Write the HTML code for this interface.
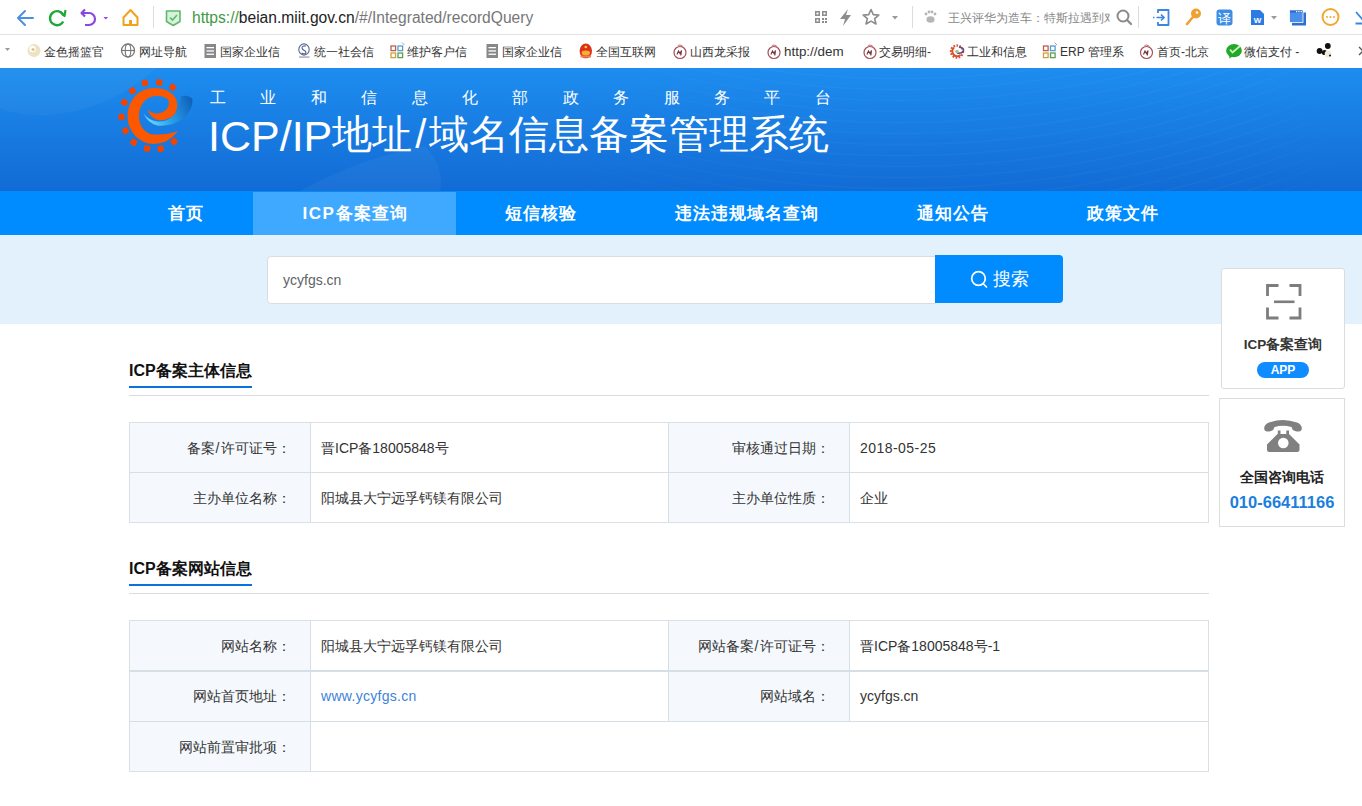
<!DOCTYPE html>
<html><head><meta charset="utf-8">
<style>
*{margin:0;padding:0;box-sizing:border-box}
html,body{width:1362px;height:806px;overflow:hidden;background:#fff;font-family:"Liberation Sans",sans-serif;color:#333}
.abs{position:absolute}
#toolbar{position:absolute;left:0;top:0;width:1362px;height:34px;background:#fff}
#tbline{position:absolute;left:0;top:34px;width:1362px;height:1px;background:#e3e3e3}
#bookmarks{position:absolute;left:0;top:35px;width:1362px;height:33px;background:#fff}
.bm{position:absolute;top:9px;font-size:12px;line-height:16px;color:#333;white-space:nowrap}
#header{position:absolute;left:0;top:68px;width:1362px;height:123px;background:linear-gradient(180deg,#1d8def 0%,#187ce2 50%,#126bd5 100%);overflow:hidden}
#nav{position:absolute;left:0;top:191px;width:1362px;height:44px;background:#008cff}
.navi{position:absolute;top:1px;height:43px;line-height:43px;color:#fff;font-size:17px;font-weight:bold;text-align:center;white-space:nowrap;letter-spacing:1px;text-indent:1px}
#band{position:absolute;left:0;top:235px;width:1362px;height:89px;background:#e3f1fc}
#sinput{position:absolute;left:267px;top:256px;width:669px;height:48px;background:#fff;border:1px solid #d9dde3;border-radius:4px 0 0 4px}
#sbtn{position:absolute;left:935px;top:255px;width:128px;height:48px;background:#008cff;border-radius:0 4px 4px 0}
.sec-title{position:absolute;left:129px;font-size:16px;font-weight:bold;color:#111;white-space:nowrap}
.sec-ul{position:absolute;left:129px;width:123px;height:2px;background:#0b72dc}
.sec-line{position:absolute;left:129px;width:1080px;height:1px;background:#d6dce2}
.tb{position:absolute;left:129px;width:1080px;border:1px solid #dcdfe4}
.cell{position:absolute;font-size:14px;color:#333;white-space:nowrap}
.vl{width:1px;background:#d6dee6}
.hl{left:129px;width:1080px;height:1px;background:#d6dee6}
.tbo{left:129px;width:1080px;border:1px solid #dcdfe3}
</style></head>
<body>
<div id="toolbar">
<svg class="abs" style="left:0;top:0" width="1362" height="34" viewBox="0 0 1362 34">
 <!-- back arrow -->
 <path d="M33 18 H18.5 M25 11 L18 18 L25 25" fill="none" stroke="#4b8fe0" stroke-width="2" stroke-linecap="round" stroke-linejoin="round"/>
 <!-- refresh -->
 <path d="M63.5 15.5 A7 7 0 1 0 63.2 21.5" fill="none" stroke="#1fa83a" stroke-width="2.4"/>
 <path d="M60 11.5 L64.5 16 L65.5 10" fill="none" stroke="#1fa83a" stroke-width="2.2" stroke-linejoin="round"/>
 <!-- undo -->
 <path d="M82 13 H89 A6 6 0 0 1 89 25 H85" fill="none" stroke="#8b45e0" stroke-width="2.2"/>
 <path d="M85 9.5 L81.5 13 L85 16.5" fill="none" stroke="#8b45e0" stroke-width="2.2" stroke-linejoin="round"/>
 <path d="M103.5 17 L108 17 L105.75 19.5 Z" fill="#8b45e0"/>
 <!-- home -->
 <path d="M123.5 17.5 L130.5 10 L137.5 17.5 V25 H123.5 Z" fill="none" stroke="#f2a11c" stroke-width="2" stroke-linejoin="round"/>
 <rect x="129" y="20" width="3" height="5" fill="#f2a11c"/>
 <!-- separator -->
 <rect x="153" y="6" width="1" height="22" fill="#dcdcdc"/>
 <!-- shield -->
 <path d="M166.5 11 H180 V21.5 L173.25 25.5 L166.5 21.5 Z" fill="#d9f0dc" stroke="#5dba6a" stroke-width="1.6" stroke-linejoin="round"/>
 <path d="M170 17.5 L172.5 20 L177 15" fill="none" stroke="#5dba6a" stroke-width="1.6"/>
 <!-- right icons -->
 <g fill="#8c8c8c">
  <rect x="815" y="11" width="5" height="5"/><rect x="822" y="11" width="5" height="5"/><rect x="815" y="18" width="5" height="5"/>
  <rect x="822" y="18" width="2" height="2"/><rect x="825" y="21" width="2" height="2"/><rect x="822" y="21" width="2" height="2"/><rect x="825" y="18" width="2" height="2"/>
 </g>
 <rect x="816.5" y="12.5" width="2" height="2" fill="#fff"/><rect x="823.5" y="12.5" width="2" height="2" fill="#fff"/><rect x="816.5" y="19.5" width="2" height="2" fill="#fff"/>
 <path d="M848 9 L840 19 H845 L843 26 L851 15 H846 Z" fill="#8c8c8c"/>
 <path d="M871 9.5 L873.3 14.6 L878.8 15.1 L874.6 18.6 L876 24 L871 21.1 L866 24 L867.4 18.6 L863.2 15.1 L868.7 14.6 Z" fill="none" stroke="#8c8c8c" stroke-width="1.6" stroke-linejoin="round"/>
 <path d="M892 16 L898 16 L895 19.5 Z" fill="#9a9a9a"/>
 <rect x="912" y="6" width="1" height="22" fill="#dcdcdc"/>
 <g fill="#b5b5b5"><circle cx="926" cy="14" r="1.4"/><circle cx="929" cy="12" r="1.4"/><circle cx="932" cy="12" r="1.4"/><circle cx="935" cy="14" r="1.4"/><ellipse cx="930.5" cy="19.5" rx="4" ry="3.2"/></g>
 <circle cx="1123" cy="16" r="5.5" fill="none" stroke="#8a8a8a" stroke-width="2"/>
 <path d="M1127 20 L1131 24" stroke="#8a8a8a" stroke-width="2.2" stroke-linecap="round"/>
 <rect x="1138" y="6" width="1" height="22" fill="#dcdcdc"/>
 <!-- login -->
 <path d="M1158 13 V10 H1168.5 V25 H1158 V22" fill="none" stroke="#3b86e0" stroke-width="1.8" stroke-linejoin="round"/>
 <path d="M1153 17.5 H1154.5 M1156.5 17.5 H1164 M1161 14.5 L1164 17.5 L1161 20.5" fill="none" stroke="#3b86e0" stroke-width="1.7"/>
 <!-- key -->
 <circle cx="1196" cy="13.5" r="5" fill="#f0a030"/>
 <circle cx="1197" cy="12.5" r="1.3" fill="#fff"/>
 <path d="M1193 17 L1187 24" stroke="#f0a030" stroke-width="2.6" stroke-linecap="round"/>
 <!-- translate -->
 <rect x="1216.5" y="9.5" width="16" height="16" rx="3" fill="#3d8de5"/>
 <text x="1224.5" y="22.5" font-size="13" fill="#fff" text-anchor="middle" font-family="Liberation Sans,sans-serif">译</text>
 <!-- W doc -->
 <path d="M1251 10 H1260 L1264 14 V25 H1251 Z" fill="#2b7be3"/>
 <text x="1257.5" y="22.5" font-size="8" font-weight="bold" fill="#fff" text-anchor="middle" font-family="Liberation Sans,sans-serif">W</text>
 <path d="M1271 16 L1277 16 L1274 19.5 Z" fill="#9a9a9a"/>
 <!-- windows -->
 <rect x="1292" y="12.5" width="14" height="13" fill="#2f6fd0"/>
 <rect x="1289.5" y="10" width="13.5" height="12.5" fill="#4a90e8" stroke="#fff" stroke-width="0.8"/>
 <rect x="1290" y="10.5" width="12.5" height="2.2" fill="#2f6fd0"/><rect x="1296" y="11" width="1.2" height="1.2" fill="#fff"/><rect x="1298.3" y="11" width="1.2" height="1.2" fill="#fff"/><rect x="1300.6" y="11" width="1.2" height="1.2" fill="#fff"/>
 <!-- more -->
 <circle cx="1330.5" cy="17" r="8" fill="none" stroke="#f0a830" stroke-width="2"/>
 <g fill="#f0a830"><circle cx="1327" cy="17" r="1"/><circle cx="1330.5" cy="17" r="1"/><circle cx="1334" cy="17" r="1"/></g>
 <!-- download -->
 <path d="M1356 12 L1363 20 M1355.5 23.5 H1363" fill="none" stroke="#3b86e0" stroke-width="1.8"/>
</svg>
<div class="abs" style="left:192px;top:8px;font-size:15.6px;line-height:20px;white-space:nowrap;color:#222"><span style="color:#3c9a46">https://</span>beian.miit.gov.cn<span style="color:#777">/#/Integrated/recordQuery</span></div>
<div class="abs" style="left:948px;top:10px;font-size:12px;line-height:16px;white-space:nowrap;color:#888;width:162px;overflow:hidden">王兴评华为造车：特斯拉遇到对手</div>
</div>
<div id="tbline"></div>
<div id="bookmarks">
<svg class="abs" style="left:0;top:0" width="1362" height="33" viewBox="0 35 1362 33">
 <path d="M5 48 L10 48 L7.5 51 Z" fill="#999"/>
 <!-- 金色摇篮官 icon -->
 <circle cx="34" cy="50.5" r="6.5" fill="#efe2c0"/><circle cx="32.5" cy="49" r="3.2" fill="#fff"/><circle cx="33" cy="49.5" r="1.6" fill="#d8c49a"/>
 <!-- globe -->
 <circle cx="128" cy="50.5" r="6.5" fill="none" stroke="#777" stroke-width="1.3"/>
 <ellipse cx="128" cy="50.5" rx="2.8" ry="6.5" fill="none" stroke="#777" stroke-width="1.1"/>
 <path d="M121.5 50.5 H134.5" stroke="#777" stroke-width="1.1"/>
 <!-- doc icons -->
 <rect x="204.5" y="44" width="11.5" height="14" fill="#888"/><rect x="206.5" y="47" width="7.5" height="1.3" fill="#fff"/><rect x="206.5" y="50.3" width="7.5" height="1.3" fill="#fff"/><rect x="206.5" y="53.6" width="7.5" height="1.3" fill="#fff"/>
 <rect x="486.5" y="44" width="11.5" height="14" fill="#888"/><rect x="488.5" y="47" width="7.5" height="1.3" fill="#fff"/><rect x="488.5" y="50.3" width="7.5" height="1.3" fill="#fff"/><rect x="488.5" y="53.6" width="7.5" height="1.3" fill="#fff"/>
 <!-- 统一社会信 icon -->
 <ellipse cx="304" cy="49.5" rx="5.2" ry="5.6" fill="none" stroke="#5b6890" stroke-width="1.1"/>
 <path d="M306 46 Q302 45.5 302 48 Q302.5 50 304.5 50.5 Q306.5 51.5 305.5 53.5 Q304 54.5 301.5 53" fill="none" stroke="#5b6890" stroke-width="1.1"/>
 <rect x="299" y="56.5" width="10.5" height="1.1" fill="#8890a8"/>
 <!-- four squares icons -->
 <g><rect x="391" y="46" width="4.6" height="4.6" fill="none" stroke="#b8604a" stroke-width="1.3"/><rect x="398" y="46" width="4.6" height="4.6" fill="none" stroke="#5a9ad0" stroke-width="1.3"/><rect x="391" y="53" width="4.6" height="4.6" fill="none" stroke="#d0a040" stroke-width="1.3"/><rect x="398" y="53" width="4.6" height="4.6" fill="none" stroke="#5aa050" stroke-width="1.3"/><path d="M402 42.5 L404.5 45" stroke="#888" stroke-width="0.8"/></g>
 <g><rect x="1043.5" y="46" width="4.6" height="4.6" fill="none" stroke="#b8604a" stroke-width="1.3"/><rect x="1050.5" y="46" width="4.6" height="4.6" fill="none" stroke="#5a9ad0" stroke-width="1.3"/><rect x="1043.5" y="53" width="4.6" height="4.6" fill="none" stroke="#d0a040" stroke-width="1.3"/><rect x="1050.5" y="53" width="4.6" height="4.6" fill="none" stroke="#5aa050" stroke-width="1.3"/><path d="M1054.5 42.5 L1057 45" stroke="#888" stroke-width="0.8"/></g>
 <!-- emblem -->
 <ellipse cx="585.8" cy="50.9" rx="6.2" ry="7.4" fill="#e0301c"/><ellipse cx="585.8" cy="53" rx="4.2" ry="2.4" fill="#f0b030"/><rect x="580.5" y="55.5" width="10.5" height="2" fill="#f08050"/><circle cx="585.8" cy="47" r="1.3" fill="#f8d040"/>
 <!-- 12306-like icons -->
 <circle cx="680" cy="52.5" r="6" fill="none" stroke="#a2505a" stroke-width="1.2"/><path d="M677 54.5 L678.5 51.0 L680 53.5 L681.5 50.5 L680.8 55.5" fill="none" stroke="#7a3840" stroke-width="1.2"/><path d="M678 45.5 Q681 44 683 47" fill="none" stroke="#c87a80" stroke-width="1.2"/><circle cx="774" cy="52.5" r="6" fill="none" stroke="#a2505a" stroke-width="1.2"/><path d="M771 54.5 L772.5 51.0 L774 53.5 L775.5 50.5 L774.8 55.5" fill="none" stroke="#7a3840" stroke-width="1.2"/><path d="M772 45.5 Q775 44 777 47" fill="none" stroke="#c87a80" stroke-width="1.2"/><circle cx="870" cy="52.5" r="6" fill="none" stroke="#a2505a" stroke-width="1.2"/><path d="M867 54.5 L868.5 51.0 L870 53.5 L871.5 50.5 L870.8 55.5" fill="none" stroke="#7a3840" stroke-width="1.2"/><path d="M868 45.5 Q871 44 873 47" fill="none" stroke="#c87a80" stroke-width="1.2"/><circle cx="1146.5" cy="52.5" r="6" fill="none" stroke="#a2505a" stroke-width="1.2"/><path d="M1143.5 54.5 L1145.0 51.0 L1146.5 53.5 L1148.0 50.5 L1147.3 55.5" fill="none" stroke="#7a3840" stroke-width="1.2"/><path d="M1144.5 45.5 Q1147.5 44 1149.5 47" fill="none" stroke="#c87a80" stroke-width="1.2"/>
 <!-- ministry gear icon -->
 <circle cx="957" cy="51.5" r="6" fill="none" stroke="#d8502e" stroke-width="2.4" stroke-dasharray="1.6 1.4"/>
 <path d="M954 47.5 A4.3 4.3 0 1 0 960.5 55" fill="none" stroke="#e0502a" stroke-width="2"/>
 <path d="M959 47 Q964 48 963.5 50.5 Q962 54 957 53" fill="none" stroke="#5a4a90" stroke-width="1.6"/>
 <circle cx="957" cy="51.5" r="1.8" fill="#9cc88a"/>
 <!-- wechat -->
 <ellipse cx="1234" cy="50.7" rx="7.9" ry="6.6" fill="#24a82c"/><path d="M1229 55 L1229.5 58.5 L1233 56 Z" fill="#24a82c"/><path d="M1230 49.5 L1232.5 52.5 L1240 46" fill="none" stroke="#c8f8b8" stroke-width="1.8"/>
 <!-- mickey -->
 <circle cx="1327.8" cy="46" r="2.9" fill="#111"/><circle cx="1319.6" cy="51" r="2.9" fill="#111"/><circle cx="1324.5" cy="52.5" r="2.6" fill="#111"/><ellipse cx="1328" cy="54" rx="3.3" ry="3.6" fill="#f2ead8"/><circle cx="1330" cy="55.5" r="1" fill="#111"/>
 <path d="M1359 47 L1363 51 L1359 55" fill="none" stroke="#555" stroke-width="1.3"/>
</svg>
<div class="bm" style="left:44px">金色摇篮官</div>
<div class="bm" style="left:139px">网址导航</div>
<div class="bm" style="left:220px">国家企业信</div>
<div class="bm" style="left:314px">统一社会信</div>
<div class="bm" style="left:407px">维护客户信</div>
<div class="bm" style="left:502px">国家企业信</div>
<div class="bm" style="left:596px">全国互联网</div>
<div class="bm" style="left:690px">山西龙采报</div>
<div class="bm" style="left:784px;font-size:13.4px">http://dem</div>
<div class="bm" style="left:879px">交易明细-</div>
<div class="bm" style="left:967px">工业和信息</div>
<div class="bm" style="left:1060px">ERP 管理系</div>
<div class="bm" style="left:1157px">首页-北京</div>
<div class="bm" style="left:1244px">微信支付 -</div>
</div>
<div id="header">
<div class="abs" style="left:0;top:0;width:1362px;height:123px;background:repeating-radial-gradient(circle at 900px -1000px, rgba(255,255,255,0) 0px, rgba(255,255,255,0) 8px, rgba(255,255,255,0.03) 9.5px, rgba(255,255,255,0) 11px);-webkit-mask-image:linear-gradient(90deg,transparent 0,transparent 480px,#000 800px,#000 1250px,transparent 1362px)"></div>
<div class="abs" style="left:-60px;top:-150px;width:260px;height:190px;border-radius:50%;background:rgba(255,255,255,0.035);transform:rotate(-25deg)"></div>
<svg class="abs" style="left:0;top:0" width="1362" height="123"><path d="M300 123 Q360 90 425 78 Q445 100 440 123 Z" fill="rgba(255,255,255,0.04)"/></svg>

<svg class="abs" style="left:0;top:0" width="1362" height="123" viewBox="0 68 1362 123">
 <defs>
  <linearGradient id="sw" x1="144" y1="120" x2="193" y2="98" gradientUnits="userSpaceOnUse"><stop offset="0" stop-color="#6fe0ff"/><stop offset="0.45" stop-color="#2aa0e8"/><stop offset="1" stop-color="#0d5cb8"/></linearGradient>
 </defs>
 <path d="M143.5 113.5 Q149 121 158 121.5 Q170 122 176.5 112 Q180 104 181.5 96 Q190 95 192.5 99.5 Q193 111 182 119.5 Q170 127 157 125.5 Q148 123 143.5 113.5 Z" fill="url(#sw)"/>
 <path d="M178 131 Q168 144 154 144 A26 28 0 0 1 127.5 116 A26 28 0 0 1 154 88 Q171 88 176.5 100 Q179 110 173 116 Q166 121 158 120 Q150 118 147.5 109.5 Q152 114 158 113.5 Q166 112 168.5 106 Q170 100 166 98 Q162 95.5 156 96 A17 19.5 0 0 0 139 117 A15.5 18 0 0 0 154 134.5 Q167 135 178 131 Z" fill="#fb5800"/>
<rect x="141.7" y="79.5" width="6.2" height="6.2" rx="1.6" fill="#f04400" transform="rotate(-99 145.0 82.8)"/>
<rect x="156.2" y="79.0" width="6.2" height="6.2" rx="1.6" fill="#f04400" transform="rotate(-74 159.5 82.3)"/>
<rect x="169.7" y="83.9" width="6.2" height="6.2" rx="1.6" fill="#f04400" transform="rotate(-51 173.0 87.2)"/>
<rect x="129.1" y="87.2" width="6.2" height="6.2" rx="1.6" fill="#f04400" transform="rotate(-125 132.4 90.5)"/>
<rect x="120.9" y="98.8" width="6.2" height="6.2" rx="1.6" fill="#f04400" transform="rotate(-152 124.2 102.1)"/>
<rect x="118.0" y="113.4" width="6.2" height="6.2" rx="1.6" fill="#f04400" transform="rotate(179 121.3 116.7)"/>
<rect x="121.9" y="127.4" width="6.2" height="6.2" rx="1.6" fill="#f04400" transform="rotate(149 125.2 130.7)"/>
<rect x="130.1" y="139.0" width="6.2" height="6.2" rx="1.6" fill="#f04400" transform="rotate(122 133.4 142.3)"/>
<rect x="143.6" y="145.3" width="6.2" height="6.2" rx="1.6" fill="#f04400" transform="rotate(95 146.9 148.6)"/>
<rect x="157.2" y="145.7" width="6.2" height="6.2" rx="1.6" fill="#f04400" transform="rotate(72 160.5 149.0)"/>
<rect x="170.7" y="138.5" width="6.2" height="6.2" rx="1.6" fill="#f04400" transform="rotate(47 174.0 141.8)"/>
</svg>
<div class="abs" style="left:210px;top:20px;font-size:16px;line-height:20px;color:#fff;white-space:nowrap;letter-spacing:34.4px;font-weight:500">工业和信息化部政务服务平台</div>
<div class="abs" style="left:208px;top:39px;font-size:40px;line-height:52px;color:#fff;white-space:nowrap;font-weight:500"><span style="font-size:43px;letter-spacing:0;position:relative;top:3px">ICP/IP</span>地址<span style="padding:0 3px">/</span>域名信息备案管理系统</div>
</div>
<div id="nav">
  <div class="navi" style="left:117px;width:136px">首页</div>
  <div class="navi" style="left:253px;width:203px;background:#3fa9ff"><span style="letter-spacing:1.6px">ICP</span>备案查询</div>
  <div class="navi" style="left:456px;width:168px">短信核验</div>
  <div class="navi" style="left:624px;width:244px">违法违规域名查询</div>
  <div class="navi" style="left:868px;width:168px">通知公告</div>
  <div class="navi" style="left:1036px;width:172px">政策文件</div>
</div>
<div id="band"></div>
<div id="sinput"><div class="abs" style="left:15px;top:13px;font-size:14px;line-height:20px;color:#606266">ycyfgs.cn</div></div>
<div id="sbtn">
 <svg class="abs" style="left:0;top:0" width="128" height="48" viewBox="935 255 128 48"><circle cx="978.5" cy="278.5" r="6.8" fill="none" stroke="#fff" stroke-width="1.7"/><path d="M983 283.5 L986.5 287" stroke="#fff" stroke-width="1.7" stroke-linecap="round"/></svg>
 <div class="abs" style="left:58px;top:12px;font-size:18px;line-height:24px;color:#fff">搜索</div>
</div>
<div class="abs" style="left:1221px;top:268px;width:124px;height:121px;background:#fff;border:1px solid #dcdcdc;border-radius:3px">
 <svg class="abs" style="left:0;top:0" width="124" height="121" viewBox="1221 268 124 121">
  <g fill="none" stroke="#7d7d7d" stroke-width="2.8">
   <path d="M1266.5 295 V284.5 H1277.5"/><path d="M1288.5 284.5 H1299 V295"/><path d="M1266.5 306.5 V317 H1277.5"/><path d="M1288.5 317 H1299 V306.5"/>
  </g>
  <rect x="1273" y="299.5" width="20.5" height="2.6" fill="#7d7d7d"/>
 </svg>
 <div class="abs" style="left:0;top:66px;width:122px;text-align:center;font-size:13.5px;line-height:20px;font-weight:bold;color:#333">ICP备案查询</div>
 <div class="abs" style="left:35px;top:93px;width:52px;height:16px;border-radius:8px;background:#0f8cff;color:#fff;font-size:12px;line-height:16px;font-weight:bold;text-align:center">APP</div>
</div>
<div class="abs" style="left:1219px;top:398px;width:126px;height:129px;background:#fff;border:1px solid #dddddd">
 <svg class="abs" style="left:0;top:0" width="126" height="129" viewBox="1219 398 126 129">
  <path d="M1263.5 429 Q1262 424 1268 421.5 Q1282 416.5 1296 421.5 Q1302 424 1300.5 429 Q1299 431.5 1294 430 Q1291 429 1290.5 426 Q1282 423.5 1273.5 426 Q1273 429 1270 430 Q1265 431.5 1263.5 429 Z" fill="#808080"/>
  <path d="M1266 448.5 L1266 443.5 L1276.5 433 H1288 L1298.5 443.5 V448.5 Q1298.5 451 1296 451 H1268.5 Q1266 451 1266 448.5 Z" fill="#808080"/>
  <rect x="1276.8" y="429.5" width="2.7" height="4" fill="#808080"/><rect x="1285.3" y="429.5" width="2.7" height="4" fill="#808080"/>
  <circle cx="1282.3" cy="442" r="5.3" fill="#fff"/>
 </svg>
 <div class="abs" style="left:0;top:68px;width:124px;text-align:center;font-size:14px;line-height:20px;font-weight:bold;color:#222">全国咨询电话</div>
 <div class="abs" style="left:0;top:93px;width:124px;text-align:center;font-size:16.5px;line-height:20px;font-weight:bold;color:#1c7fdc">010-66411166</div>
</div>

<div class="sec-title" style="top:359px;line-height:24px">ICP备案主体信息</div>
<div class="sec-ul" style="top:386px"></div>
<div class="sec-line" style="top:395px"></div>
<div class="abs" style="left:129px;top:422px;width:181px;height:50px;background:#f5f9fd"></div>
<div class="abs" style="left:668px;top:422px;width:181px;height:50px;background:#f5f9fd"></div>
<div class="abs" style="left:129px;top:472px;width:181px;height:50px;background:#f5f9fd"></div>
<div class="abs" style="left:668px;top:472px;width:181px;height:50px;background:#f5f9fd"></div>
<div class="abs vl" style="left:310px;top:422px;height:50px"></div>
<div class="abs vl" style="left:668px;top:422px;height:50px"></div>
<div class="abs vl" style="left:849px;top:422px;height:50px"></div>
<div class="abs vl" style="left:310px;top:472px;height:50px"></div>
<div class="abs vl" style="left:668px;top:472px;height:50px"></div>
<div class="abs vl" style="left:849px;top:472px;height:50px"></div>
<div class="abs hl" style="top:472px"></div>
<div class="abs tbo" style="top:422px;height:101px"></div>
<div class="cell" style="left:129px;top:423px;width:161.5px;height:50px;line-height:50px;text-align:right">备案<span style="padding:0 1px">/</span>许可证号：</div>
<div class="cell" style="left:321px;top:423px;height:50px;line-height:50px">晋ICP备18005848号</div>
<div class="cell" style="left:668px;top:423px;width:161.5px;height:50px;line-height:50px;text-align:right">审核通过日期：</div>
<div class="cell" style="left:860px;top:423px;height:50px;line-height:50px"><span style="letter-spacing:0.45px">2018-05-25</span></div>
<div class="cell" style="left:129px;top:473px;width:161.5px;height:50px;line-height:50px;text-align:right">主办单位名称：</div>
<div class="cell" style="left:321px;top:473px;height:50px;line-height:50px">阳城县大宁远孚钙镁有限公司</div>
<div class="cell" style="left:668px;top:473px;width:161.5px;height:50px;line-height:50px;text-align:right">主办单位性质：</div>
<div class="cell" style="left:860px;top:473px;height:50px;line-height:50px">企业</div>
<div class="sec-title" style="top:557px;line-height:24px">ICP备案网站信息</div>
<div class="sec-ul" style="top:584px"></div>
<div class="sec-line" style="top:593px"></div>
<div class="abs" style="left:129px;top:620px;width:181px;height:50px;background:#f5f9fd"></div>
<div class="abs" style="left:668px;top:620px;width:181px;height:50px;background:#f5f9fd"></div>
<div class="abs" style="left:129px;top:670px;width:181px;height:51px;background:#f5f9fd"></div>
<div class="abs" style="left:668px;top:670px;width:181px;height:51px;background:#f5f9fd"></div>
<div class="abs" style="left:129px;top:721px;width:181px;height:50px;background:#f5f9fd"></div>
<div class="abs vl" style="left:310px;top:620px;height:50px"></div>
<div class="abs vl" style="left:668px;top:620px;height:50px"></div>
<div class="abs vl" style="left:849px;top:620px;height:50px"></div>
<div class="abs vl" style="left:310px;top:670px;height:51px"></div>
<div class="abs vl" style="left:668px;top:670px;height:51px"></div>
<div class="abs vl" style="left:849px;top:670px;height:51px"></div>
<div class="abs vl" style="left:310px;top:721px;height:50px"></div>
<div class="abs hl" style="top:670px;height:2px"></div>
<div class="abs hl" style="top:721px"></div>
<div class="abs tbo" style="top:620px;height:152px"></div>
<div class="cell" style="left:129px;top:621px;width:161.5px;height:50px;line-height:50px;text-align:right">网站名称：</div>
<div class="cell" style="left:321px;top:621px;height:50px;line-height:50px">阳城县大宁远孚钙镁有限公司</div>
<div class="cell" style="left:668px;top:621px;width:161.5px;height:50px;line-height:50px;text-align:right">网站备案<span style="padding:0 1px">/</span>许可证号：</div>
<div class="cell" style="left:860px;top:621px;height:50px;line-height:50px">晋ICP备18005848号-1</div>
<div class="cell" style="left:129px;top:671px;width:161.5px;height:51px;line-height:51px;text-align:right">网站首页地址：</div>
<div class="cell" style="left:321px;top:671px;height:51px;line-height:51px"><span style="color:#3d83d9;letter-spacing:0.3px">www.ycyfgs.cn</span></div>
<div class="cell" style="left:668px;top:671px;width:161.5px;height:51px;line-height:51px;text-align:right">网站域名：</div>
<div class="cell" style="left:860px;top:671px;height:51px;line-height:51px">ycyfgs.cn</div>
<div class="cell" style="left:129px;top:722px;width:161.5px;height:50px;line-height:50px;text-align:right">网站前置审批项：</div>
</body></html>
